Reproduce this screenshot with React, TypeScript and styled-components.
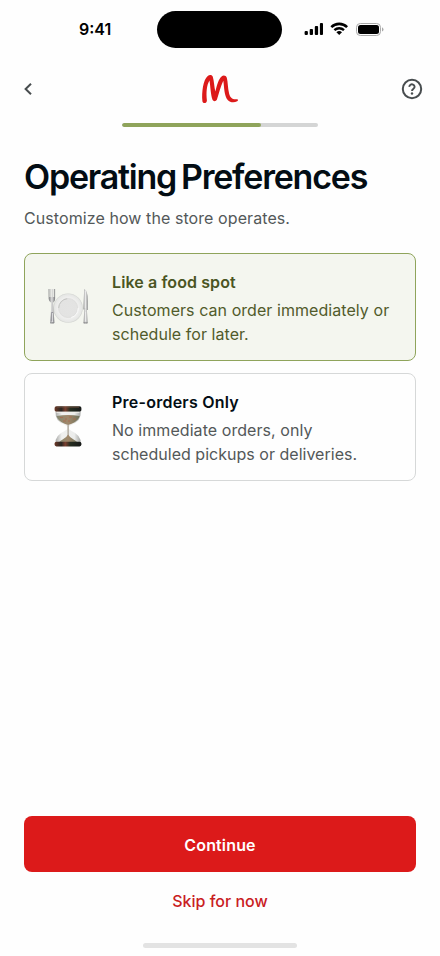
import React from 'react';
import styled, { createGlobalStyle } from 'styled-components';

const GlobalStyle = createGlobalStyle`
  *, *::before, *::after { box-sizing: border-box; }
  body { margin: 0; background: #fefefe; }
  button { font: inherit; border: 0; background: none; padding: 0; cursor: pointer; }
  svg { display: block; }
`;

const Screen = styled.div`
  width: 440px;
  height: 956px;
  display: flex;
  flex-direction: column;
  overflow: hidden;
  background: #fefefe;
  font-family: Inter, 'Open Sans', sans-serif;
  color: #030d14;
`;

const StatusBar = styled.div`
  height: 59px;
  flex: none;
  display: grid;
  grid-template-columns: 157.4px 125px 157.6px;
`;

const Clock = styled.time`
  padding: 18px 0 0 79px;
  font-size: 16px;
  line-height: 22px;
  font-weight: 600;
  letter-spacing: 0;
  color: #000;
`;

const Island = styled.div`
  height: 37px;
  margin-top: 11px;
  border-radius: 19px;
  background: #000;
`;

const Indicators = styled.div`
  display: flex;
  padding: 22px 0 0 21.6px;
`;

const Header = styled.header`
  height: 60px;
  flex: none;
  display: flex;
  justify-content: space-between;
  align-items: center;
  padding: 0 16px;
`;

const IconButton = styled.button`
  width: 24px;
  height: 24px;
`;

const Progress = styled.div`
  width: 196px;
  height: 4px;
  flex: none;
  margin: 4px auto 0;
  border-radius: 2px;
  background: #d4d5d5;
  overflow: hidden;
`;

const ProgressFill = styled.div`
  width: 139px;
  height: 4px;
  border-radius: 2px;
  background: #8fa45b;
`;

const Content = styled.main`
  flex: 1;
  padding: 30px 24px 0;
`;

const Title = styled.h1`
  margin: 0;
  font-size: 34px;
  line-height: 40px;
  font-weight: 600;
  letter-spacing: -1.22px;
  word-spacing: -2.5px;
  white-space: nowrap;
`;

const Subtitle = styled.p`
  margin: 9px 0 23px;
  font-size: 16px;
  line-height: 24px;
  letter-spacing: 0.08px;
  color: #535859;
`;

const Options = styled.div`
  display: flex;
  flex-direction: column;
  gap: 12px;
`;

const OptionCard = styled.div<{ $selected?: boolean }>`
  height: 108px;
  display: flex;
  align-items: center;
  gap: 16px;
  padding: 2px 15px 0;
  border-radius: 8px;
  border: 1px solid ${(p) => (p.$selected ? '#8fa45b' : '#d6d8d8')};
  background: ${(p) => (p.$selected ? '#f4f6ef' : '#fefefe')};
  color: ${(p) => (p.$selected ? '#4b5523' : '#030d14')};
`;

const OptionTitle = styled.h2<{ $spacing: number }>`
  margin: 0 0 4px;
  font-size: 16px;
  line-height: 24px;
  font-weight: 600;
  letter-spacing: ${(p) => p.$spacing}px;
`;

const OptionLine = styled.div<{ $selected?: boolean; $spacing: number }>`
  font-size: 16px;
  line-height: 24px;
  white-space: nowrap;
  letter-spacing: ${(p) => p.$spacing}px;
  color: ${(p) => (p.$selected ? '#515b2b' : '#535859')};
`;

const Footer = styled.footer`
  flex: none;
  height: 140px;
  padding: 0 24px;
  display: flex;
  flex-direction: column;
  align-items: center;
`;

const PrimaryButton = styled.button`
  && {
    width: 100%;
    height: 56px;
    flex: none;
    border-radius: 8px;
    background: #dc1a1a;
    color: #fff;
    font-size: 16px;
    line-height: 24px;
    font-weight: 600;
    letter-spacing: 0.15px;
    padding-top: 2px;
  }
`;

const TextButton = styled.button`
  && {
    height: 24px;
    margin-top: 17px;
    color: #c9201f;
    font-size: 16px;
    line-height: 24px;
    font-weight: 500;
    letter-spacing: 0;
  }
`;

const HomeIndicator = styled.div`
  width: 154px;
  height: 5px;
  margin-top: 30px;
  border-radius: 3px;
  background: #e3e3e3;
`;

function StatusIcons() {
  return (
    <svg width="80" height="16" viewBox="0 0 80 16">
      <rect x="0.6" y="9.1" width="3.3" height="3.8" rx="1" />
      <rect x="5.7" y="6.9" width="3.3" height="6" rx="1" />
      <rect x="10.8" y="4.1" width="3.3" height="8.8" rx="1" />
      <rect x="15.9" y="1.1" width="3.1" height="11.8" rx="1" />
      <path d="M27.3 5.1a11.3 11.3 0 0 1 15.8 0" fill="none" stroke="#000" strokeWidth="2.6" />
      <path d="M30.4 8.2a7 7 0 0 1 9.6 0" fill="none" stroke="#000" strokeWidth="2.4" />
      <path d="M35.2 13l-2.8-2.8a4.1 4.1 0 0 1 5.6 0z" />
      <rect x="52.5" y="1.5" width="24" height="12" rx="3.8" fill="none" stroke="#a9a9a9" />
      <rect x="54" y="3" width="21" height="9" rx="2.5" />
      <path d="M78 5.3v4.2q1.5-.7 1.5-2.1T78 5.3z" fill="#a9a9a9" />
    </svg>
  );
}

function BackIcon() {
  return (
    <svg width="24" height="24" viewBox="0 0 24 24" fill="none" stroke="#484d4f" strokeWidth="2">
      <path d="M15 6.7 9.6 12l5.4 5.3" />
    </svg>
  );
}

function HelpIcon() {
  return (
    <svg width="24" height="24" viewBox="0 0 24 24" fill="none" stroke="#484d4f" strokeWidth="2">
      <circle cx="12" cy="12" r="9.2" />
      <path d="M9.4 9.9a2.6 2.4 0 1 1 4.2 1.7c-.9.8-1.6 1.2-1.6 2.3" strokeWidth="1.9" />
      <circle cx="12" cy="16.5" r="1.2" fill="#484d4f" stroke="none" />
    </svg>
  );
}

function Logo() {
  return (
    <svg width="40" height="32" viewBox="0 0 40 32" fill="#dc1a1a">
      <path d="M2.4 28.3C1.5 19 3.3 6.500 7.500 3.200 9.300 1.600 12 1.500 12.800 3.800c1.300 4.300 1.400 10.200 2.500 14.700C17 12 18.600 5.800 21.600 3.400c1.700-1.300 4.400-1.100 5.200 1.400 1.200 4.400.9 10.300 2.300 15.600 1 3.900 3.400 6.500 7.900 5.800 1.300-.1 1.300 1.300.2 2-3.300 1.800-7.300 1.100-9.500-1.300-3.600-4.100-3.400-12.400-4.400-19.100-2.700 5.700-4.500 12.700-6.200 18.300-.6 2.600-3.700 2.800-4.600.7C10.700 22 10.400 13.500 9.500 7.600 6.500 12.500 6.100 20 6.900 27.500c.2 2.800-4.200 3.700-4.500.8z" />
    </svg>
  );
}

function PlateIcon() {
  return (
    <svg width="56" height="56" viewBox="0 0 56 56">
      <defs>
        <linearGradient id="steel">
          <stop offset="0" stopColor="#77787a" />
          <stop offset=".5" stopColor="#dedede" />
          <stop offset="1" stopColor="#77787a" />
        </linearGradient>
        <radialGradient id="plate">
          <stop offset="0" stopColor="#e4e4e3" />
          <stop offset=".6" stopColor="#e3e3e2" />
          <stop offset=".7" stopColor="#efefee" />
          <stop offset=".92" stopColor="#e6e7e5" />
          <stop offset="1" stopColor="#d0d2cf" />
        </radialGradient>
      </defs>
      <circle cx="28.1" cy="28.1" r="14.7" fill="url(#plate)" />
      <circle cx="28.1" cy="28" r="9.5" fill="none" stroke="#d8d9d7" strokeWidth=".6" />
      <path d="M18.7 28a9.5 9.5 0 0 1 8.5-9.3" fill="none" stroke="#bfc1be" strokeWidth=".9" />
      <path d="M38.2 28a10 10 0 0 1-7 9.500" fill="none" stroke="#fafafa" />
      <path d="M8.600 9h.9v8h1v-8h.9v8h.9v-8h.9v8h1v-8h.9v10q0 2.900-2 3.800l.5 8 .9 12q-2.200 1.400-4.400 0l.9-12 .2-8q-2.300-.9-2.500-3.800z" fill="url(#steel)" />
      <path d="M11.2 32h2l.6 9.500h-3.200z" fill="#7c7d86" opacity=".65" />
      <path d="M12.500 33v9" stroke="#e8e8ea" strokeWidth=".8" />
      <path d="M44.200 9q3.700.8 3.700 12v9h-1l.8 13q-2 1.200-4.200 0l.8-13.500h-1z" fill="url(#steel)" opacity=".8" />
      <path d="M45.300 11v17M45.600 32v9" stroke="#ededed" strokeWidth=".9" />
      <path d="M43.600 42.900h3.900M10.200 42.900h3.900" stroke="#77787a" strokeWidth=".9" />
    </svg>
  );
}

function HourglassIcon() {
  return (
    <svg width="56" height="56" viewBox="0 0 56 56">
      <defs>
        <linearGradient id="glass">
          <stop offset="0" stopColor="#a9aaa8" />
          <stop offset=".25" stopColor="#f0f0ef" />
          <stop offset=".75" stopColor="#ebeceb" />
          <stop offset="1" stopColor="#a3a5a3" />
        </linearGradient>
        <linearGradient id="cap">
          <stop offset="0" stopColor="#6b3827" />
          <stop offset=".25" stopColor="#292622" />
          <stop offset=".4" stopColor="#7a4030" />
          <stop offset=".58" stopColor="#252d20" />
          <stop offset="1" stopColor="#171918" />
        </linearGradient>
        <linearGradient id="sand">
          <stop offset="0" stopColor="#858871" />
          <stop offset=".5" stopColor="#a1886b" />
          <stop offset="1" stopColor="#70745d" />
        </linearGradient>
      </defs>
      <path d="M15.600 12h25q.8 9-9 12.700-3 1.300-3 3t3 3.200q10 4.500 9 12.500h-25q-1-8 9-12.500 3-1.500 3-3.200t-3-3q-9.800-3.700-9-12.700z" fill="url(#glass)" />
      <path d="M16.600 16q11.500-1.800 23 0-1 5-8 7.800-2.300.9-3.500 1-1.200-.1-3.500-1-7-2.800-8-7.800z" fill="url(#sand)" />
      <path d="M20 17.500h3m2 1.500h2m2-2h3m1 2h3m-13 2h3m2 0h2" stroke="#ad6a4f" strokeWidth=".8" />
      <path d="M28.100 24v12" stroke="#8c8271" strokeWidth=".9" />
      <path d="M28.100 34.500q1.500 3 5.500 5 3.500 1.500 4 4h-19q.5-2.500 4-4 4-2 5.500-5z" fill="url(#sand)" />
      <rect x="14.600" y="6.300" width="26.800" height="5.400" rx="1.800" fill="url(#cap)" />
      <path d="M17 7.100h22" stroke="#77513d" strokeWidth=".8" />
      <path d="M16.500 12.300h23" stroke="#f0efea" strokeWidth="1" />
      <rect x="14.600" y="41.800" width="26.800" height="4.600" rx="1.800" fill="url(#cap)" />
    </svg>
  );
}

export default function App() {
  return (
    <>
      <GlobalStyle />
      <Screen>
        <StatusBar>
          <Clock>9:41</Clock>
          <Island />
          <Indicators><StatusIcons /></Indicators>
        </StatusBar>
        <Header>
          <IconButton aria-label="Back"><BackIcon /></IconButton>
          <Logo />
          <IconButton aria-label="Help"><HelpIcon /></IconButton>
        </Header>
        <Progress><ProgressFill /></Progress>
        <Content>
          <Title>Operating Preferences</Title>
          <Subtitle>Customize how the store operates.</Subtitle>
          <Options>
            <OptionCard $selected>
              <PlateIcon />
              <div>
                <OptionTitle $spacing={0.1}>Like a food spot</OptionTitle>
                <OptionLine $selected $spacing={0.06}>Customers can order immediately or</OptionLine>
                <OptionLine $selected $spacing={0.05}>schedule for later.</OptionLine>
              </div>
            </OptionCard>
            <OptionCard>
              <HourglassIcon />
              <div>
                <OptionTitle $spacing={0.24}>Pre-orders Only</OptionTitle>
                <OptionLine $spacing={0.06}>No immediate orders, only</OptionLine>
                <OptionLine $spacing={0.02}>scheduled pickups or deliveries.</OptionLine>
              </div>
            </OptionCard>
          </Options>
        </Content>
        <Footer>
          <PrimaryButton>Continue</PrimaryButton>
          <TextButton>Skip for now</TextButton>
          <HomeIndicator />
        </Footer>
      </Screen>
    </>
  );
}
